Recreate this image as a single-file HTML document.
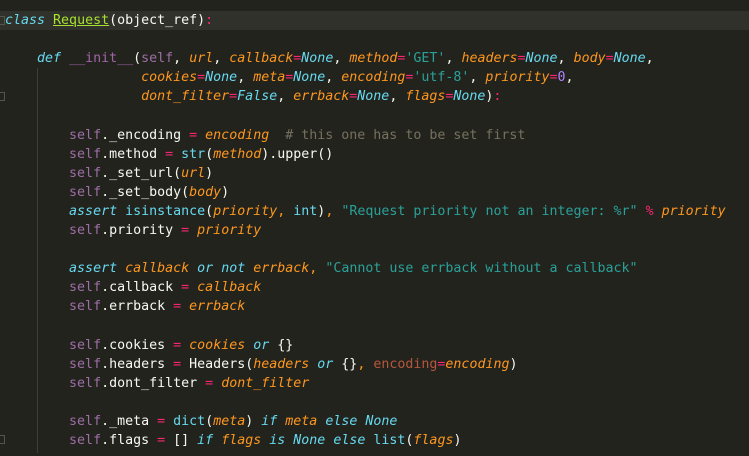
<!DOCTYPE html>
<html><head><meta charset="utf-8"><style>
html,body{margin:0;padding:0;background:#23231e;width:749px;height:456px;overflow:hidden}
.cur{position:absolute;left:0;top:11px;width:749px;height:19px;background:#31312b}
.guide{position:absolute;left:37px;top:68px;width:1px;height:385px;background:#3e3e37}
.fold{position:absolute;left:0;width:4px;height:7px;border:1px solid #55554c;border-left:none}
pre{position:absolute;left:5px;top:11px;margin:0;font-family:"DejaVu Sans Mono","Liberation Mono",monospace;font-size:13.3px;line-height:19.1px;color:#f8f8f2;white-space:pre}
.k{color:#66d9ef;font-style:italic}
.b{color:#66d9ef}
.p{color:#fd971f;font-style:italic}
.pc{color:#fd971f}
.o{color:#f92672}
.s{color:#2aa198}
.c{color:#75715e}
.n{color:#ae81ff}
.sf{color:#9d6ea5}
.cl{color:#a6e22e;text-decoration:underline}
.kw{color:#b5573b}
.pr{color:#a063a8}
</style></head><body>
<div class="cur"></div>
<div class="guide"></div>
<div class="fold" style="top:16px"></div>
<div class="fold" style="top:92px"></div>
<div class="fold" style="top:435px"></div>
<pre><span class="k">class</span> <span class="cl">Request</span>(object_ref)<span class="o">:</span>

    <span class="k">def</span> <span class="pr">__init__</span>(<span class="sf">self</span>, <span class="p">url</span>, <span class="p">callback</span><span class="o">=</span><span class="k">None</span>, <span class="p">method</span><span class="o">=</span><span class="s">'GET'</span>, <span class="p">headers</span><span class="o">=</span><span class="k">None</span>, <span class="p">body</span><span class="o">=</span><span class="k">None</span>,
                 <span class="p">cookies</span><span class="o">=</span><span class="k">None</span>, <span class="p">meta</span><span class="o">=</span><span class="k">None</span>, <span class="p">encoding</span><span class="o">=</span><span class="s">'utf-8'</span>, <span class="p">priority</span><span class="o">=</span><span class="n">0</span>,
                 <span class="p">dont_filter</span><span class="o">=</span><span class="k">False</span>, <span class="p">errback</span><span class="o">=</span><span class="k">None</span>, <span class="p">flags</span><span class="o">=</span><span class="k">None</span>)<span class="o">:</span>

        <span class="sf">self</span>._encoding <span class="o">=</span> <span class="p">encoding</span>  <span class="c"># this one has to be set first</span>
        <span class="sf">self</span>.method <span class="o">=</span> <span class="b">str</span>(<span class="p">method</span>).upper()
        <span class="sf">self</span>._set_url(<span class="p">url</span>)
        <span class="sf">self</span>._set_body(<span class="p">body</span>)
        <span class="k">assert</span> <span class="b">isinstance</span>(<span class="p">priority</span><span class="pc">,</span> <span class="b">int</span>)<span class="pc">,</span> <span class="s">"Request priority not an integer: %r"</span> <span class="o">%</span> <span class="p">priority</span>
        <span class="sf">self</span>.priority <span class="o">=</span> <span class="p">priority</span>

        <span class="k">assert</span> <span class="p">callback</span> <span class="k">or</span> <span class="k">not</span> <span class="p">errback</span><span class="pc">,</span> <span class="s">"Cannot use errback without a callback"</span>
        <span class="sf">self</span>.callback <span class="o">=</span> <span class="p">callback</span>
        <span class="sf">self</span>.errback <span class="o">=</span> <span class="p">errback</span>

        <span class="sf">self</span>.cookies <span class="o">=</span> <span class="p">cookies</span> <span class="k">or</span> {}
        <span class="sf">self</span>.headers <span class="o">=</span> Headers(<span class="p">headers</span> <span class="k">or</span> {}<span class="pc">,</span> <span class="kw">encoding</span><span class="o">=</span><span class="p">encoding</span>)
        <span class="sf">self</span>.dont_filter <span class="o">=</span> <span class="p">dont_filter</span>

        <span class="sf">self</span>._meta <span class="o">=</span> <span class="b">dict</span>(<span class="p">meta</span>) <span class="k">if</span> <span class="p">meta</span> <span class="k">else</span> <span class="k">None</span>
        <span class="sf">self</span>.flags <span class="o">=</span> [] <span class="k">if</span> <span class="p">flags</span> <span class="k">is</span> <span class="k">None</span> <span class="k">else</span> <span class="b">list</span>(<span class="p">flags</span>)
</pre>
</body></html>
